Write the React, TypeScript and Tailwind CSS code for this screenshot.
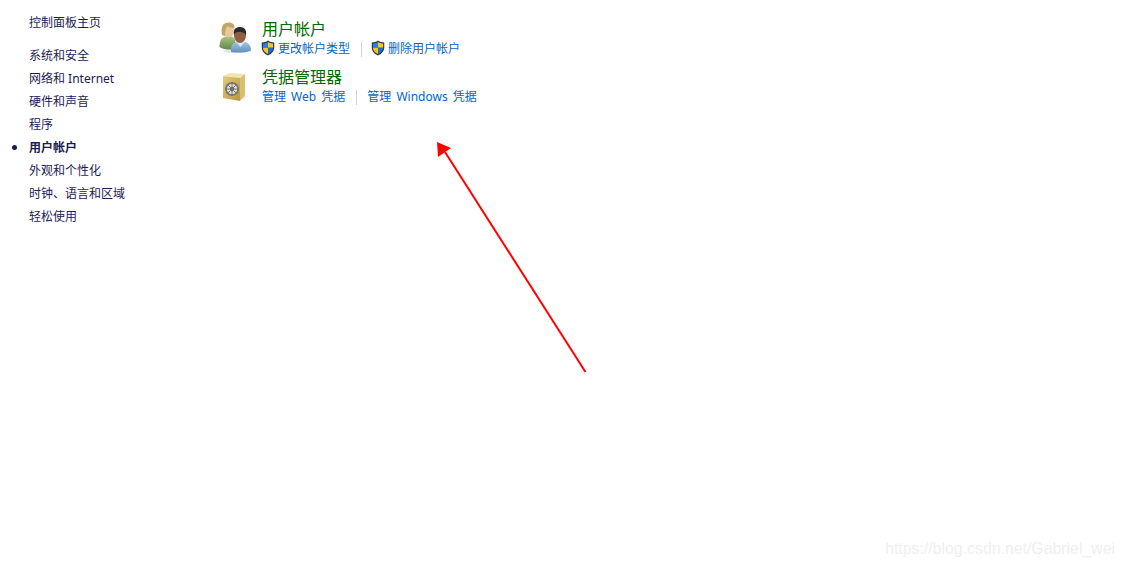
import * as React from 'react';

const NAV_ITEMS = ['系统和安全', '网络和 Internet', '硬件和声音', '程序', '用户帐户', '外观和个性化', '时钟、语言和区域', '轻松使用'];

const Shield = () => (
  <svg width="14" height="16" viewBox="0 0 15 17" className="mt-[-2px] shrink-0">
    <path d="M7.5 0.5 C5.5 2 3 2.6 0.8 2.6 L0.8 8 C0.8 12 3.8 15 7.5 16.5 C11.2 15 14.2 12 14.2 8 L14.2 2.6 C12 2.6 9.5 2 7.5 0.5 Z" fill="#27384f" />
    <path d="M7.5 2 L7.5 8.2 L2 8.2 L2 3.7 C4 3.6 6 3 7.5 2 Z" fill="#2a7fd6" />
    <path d="M7.5 2 C9 3 11 3.6 13 3.7 L13 8.2 L7.5 8.2 Z" fill="#f7c325" />
    <path d="M2 8.2 L7.5 8.2 L7.5 15 C4.5 13.8 2.2 11.4 2 8.2 Z" fill="#f7c325" />
    <path d="M7.5 8.2 L13 8.2 C12.8 11.4 10.5 13.8 7.5 15 Z" fill="#1f6fc4" />
  </svg>
);

const UsersIcon = () => (
  <svg width="32" height="32" viewBox="0 0 32 32" className="shrink-0">
    <defs>
      <linearGradient id="shirtGreen" x1="0" y1="0" x2="0" y2="1">
        <stop offset="0" stopColor="#a9c184" />
        <stop offset="1" stopColor="#5f8a4a" />
      </linearGradient>
      <linearGradient id="shirtBlue" x1="0" y1="0" x2="0" y2="1">
        <stop offset="0" stopColor="#a5c5e2" />
        <stop offset="1" stopColor="#5d8fc0" />
      </linearGradient>
    </defs>
    <ellipse cx="18" cy="30" rx="14" ry="2" fill="#e6e6e6" />
    <path d="M0.500 26 C0.500 20 2 17 6 15.500 L13 15.500 C16 17 17 20 17 28 C12 29 5 29 0.500 26 Z" fill="url(#shirtGreen)" />
    <ellipse cx="9.500" cy="9.500" rx="5.500" ry="7" fill="#e8c6a0" />
    <path d="M3 14 C1.500 5 4.500 1.500 9.500 1.500 C14 1.500 16 4 15.500 7 C12.500 7 9.500 6 8 5 C6.500 8 6 11 6 15 Z" fill="#bfa867" />
    <path d="M12 31 C11.500 25 13.500 22 18 21 L26 21 C30 22 32 25 32 29.500 C26 32 17 32 12 31 Z" fill="url(#shirtBlue)" />
    <path d="M17.500 21 L21.500 26 L25.500 21 Z" fill="#e2ecf5" />
    <ellipse cx="21" cy="14.500" rx="6" ry="7.500" fill="#8f5f43" />
    <path d="M15 14 C14 8 17 6 21 6 C25.500 6 28 9 27 14.500 C26 11.500 23 11 19.500 11 C17 11 16 12 15 14 Z" fill="#2b2a2a" />
  </svg>
);

const VaultIcon = () => (
  <svg width="32" height="32" viewBox="0 0 32 32" className="shrink-0">
    <defs>
      <linearGradient id="vaultFace" x1="0" y1="0" x2="1" y2="1">
        <stop offset="0" stopColor="#e4cb7c" />
        <stop offset="1" stopColor="#b8963f" />
      </linearGradient>
    </defs>
    <path d="M25 28 L31 25 L24 31 Z" fill="#ececec" />
    <path d="M4 7 L11 4 L26 5 L21 9 Z" fill="#f3e4ad" />
    <path d="M21 9 L26 5 L26 27 L21 32 Z" fill="#d9bf72" />
    <path d="M4 7 L21 9 L21 32 L4 29 Z" fill="url(#vaultFace)" />
    <circle cx="13" cy="20" r="7" fill="#77776f" />
    <circle cx="13" cy="20" r="5.200" fill="#dcdcd4" />
    <circle cx="13" cy="20" r="2.200" fill="#6b6b64" />
    <path d="M13 13.500 V26.500 M6.500 20 H19.500 M8.500 15.500 L17.500 24.500 M17.500 15.500 L8.500 24.500" stroke="#6f6f68" strokeWidth="0.9" />
  </svg>
);

export default function App() {
  return (
    <div className="relative flex h-[567px] w-[1123px] overflow-hidden bg-white font-['Noto_Sans','Noto_Sans_CJK_SC',sans-serif] text-xs leading-[23px]">
      <div className="w-[219px] shrink-0 pl-[29px] pt-[11px] text-[#1b1b55]">
        <div className="mb-[10px]">控制面板主页</div>
        {NAV_ITEMS.map(item => (
          <div key={item} className={item === '用户帐户' ? 'relative font-bold' : ''}>
            {item === '用户帐户' && <span className="absolute left-[-17px] top-[9px] h-[5px] w-[5px] rounded-full bg-[#1b1b55]" />}
            {item}
          </div>
        ))}
      </div>

      <div className="flex flex-col gap-[8px] pt-[18px]">
        <div className="flex gap-[10px]">
          <div className="pt-[3px]">
            <UsersIcon />
          </div>
          <div>
            <div className="ml-px h-[22px] text-base leading-[22px] text-[#006a00]">用户帐户</div>
            <div className="flex h-[18px] items-center leading-[18px] text-[#0066cc]">
              <Shield />
              <span className="ml-[3px]">更改帐户类型</span>
              <span className="ml-[11px] mr-[9px] h-[15px] w-px bg-[#cfd4d9]" />
              <Shield />
              <span className="ml-[3px]">删除用户帐户</span>
            </div>
          </div>
        </div>
        <div className="flex gap-[10px]">
          <div className="pt-[3px]">
            <VaultIcon />
          </div>
          <div>
            <div className="ml-px h-[22px] text-base leading-[22px] text-[#006a00]">凭据管理器</div>
            <div className="ml-px flex h-[18px] items-center leading-[18px] text-[#0066cc] [word-spacing:2px]">
              <span>管理 Web 凭据</span>
              <span className="ml-[11px] mr-[10px] h-[15px] w-px bg-[#cfd4d9]" />
              <span>管理 Windows 凭据</span>
            </div>
          </div>
        </div>
      </div>

      <svg width="1123" height="567" className="absolute left-0 top-0">
        <line x1="585.500" y1="372" x2="445" y2="152" stroke="#ff0000" strokeWidth="2" />
        <path d="M437 142 L451 148 L438 157 Z" fill="#ff0000" />
      </svg>

      <div className="absolute bottom-[8px] right-[8px] font-['Liberation_Sans',sans-serif] text-[15.85px] leading-[20px] text-[#efefef]">https://blog.csdn.net/Gabriel_wei</div>
    </div>
  );
}
